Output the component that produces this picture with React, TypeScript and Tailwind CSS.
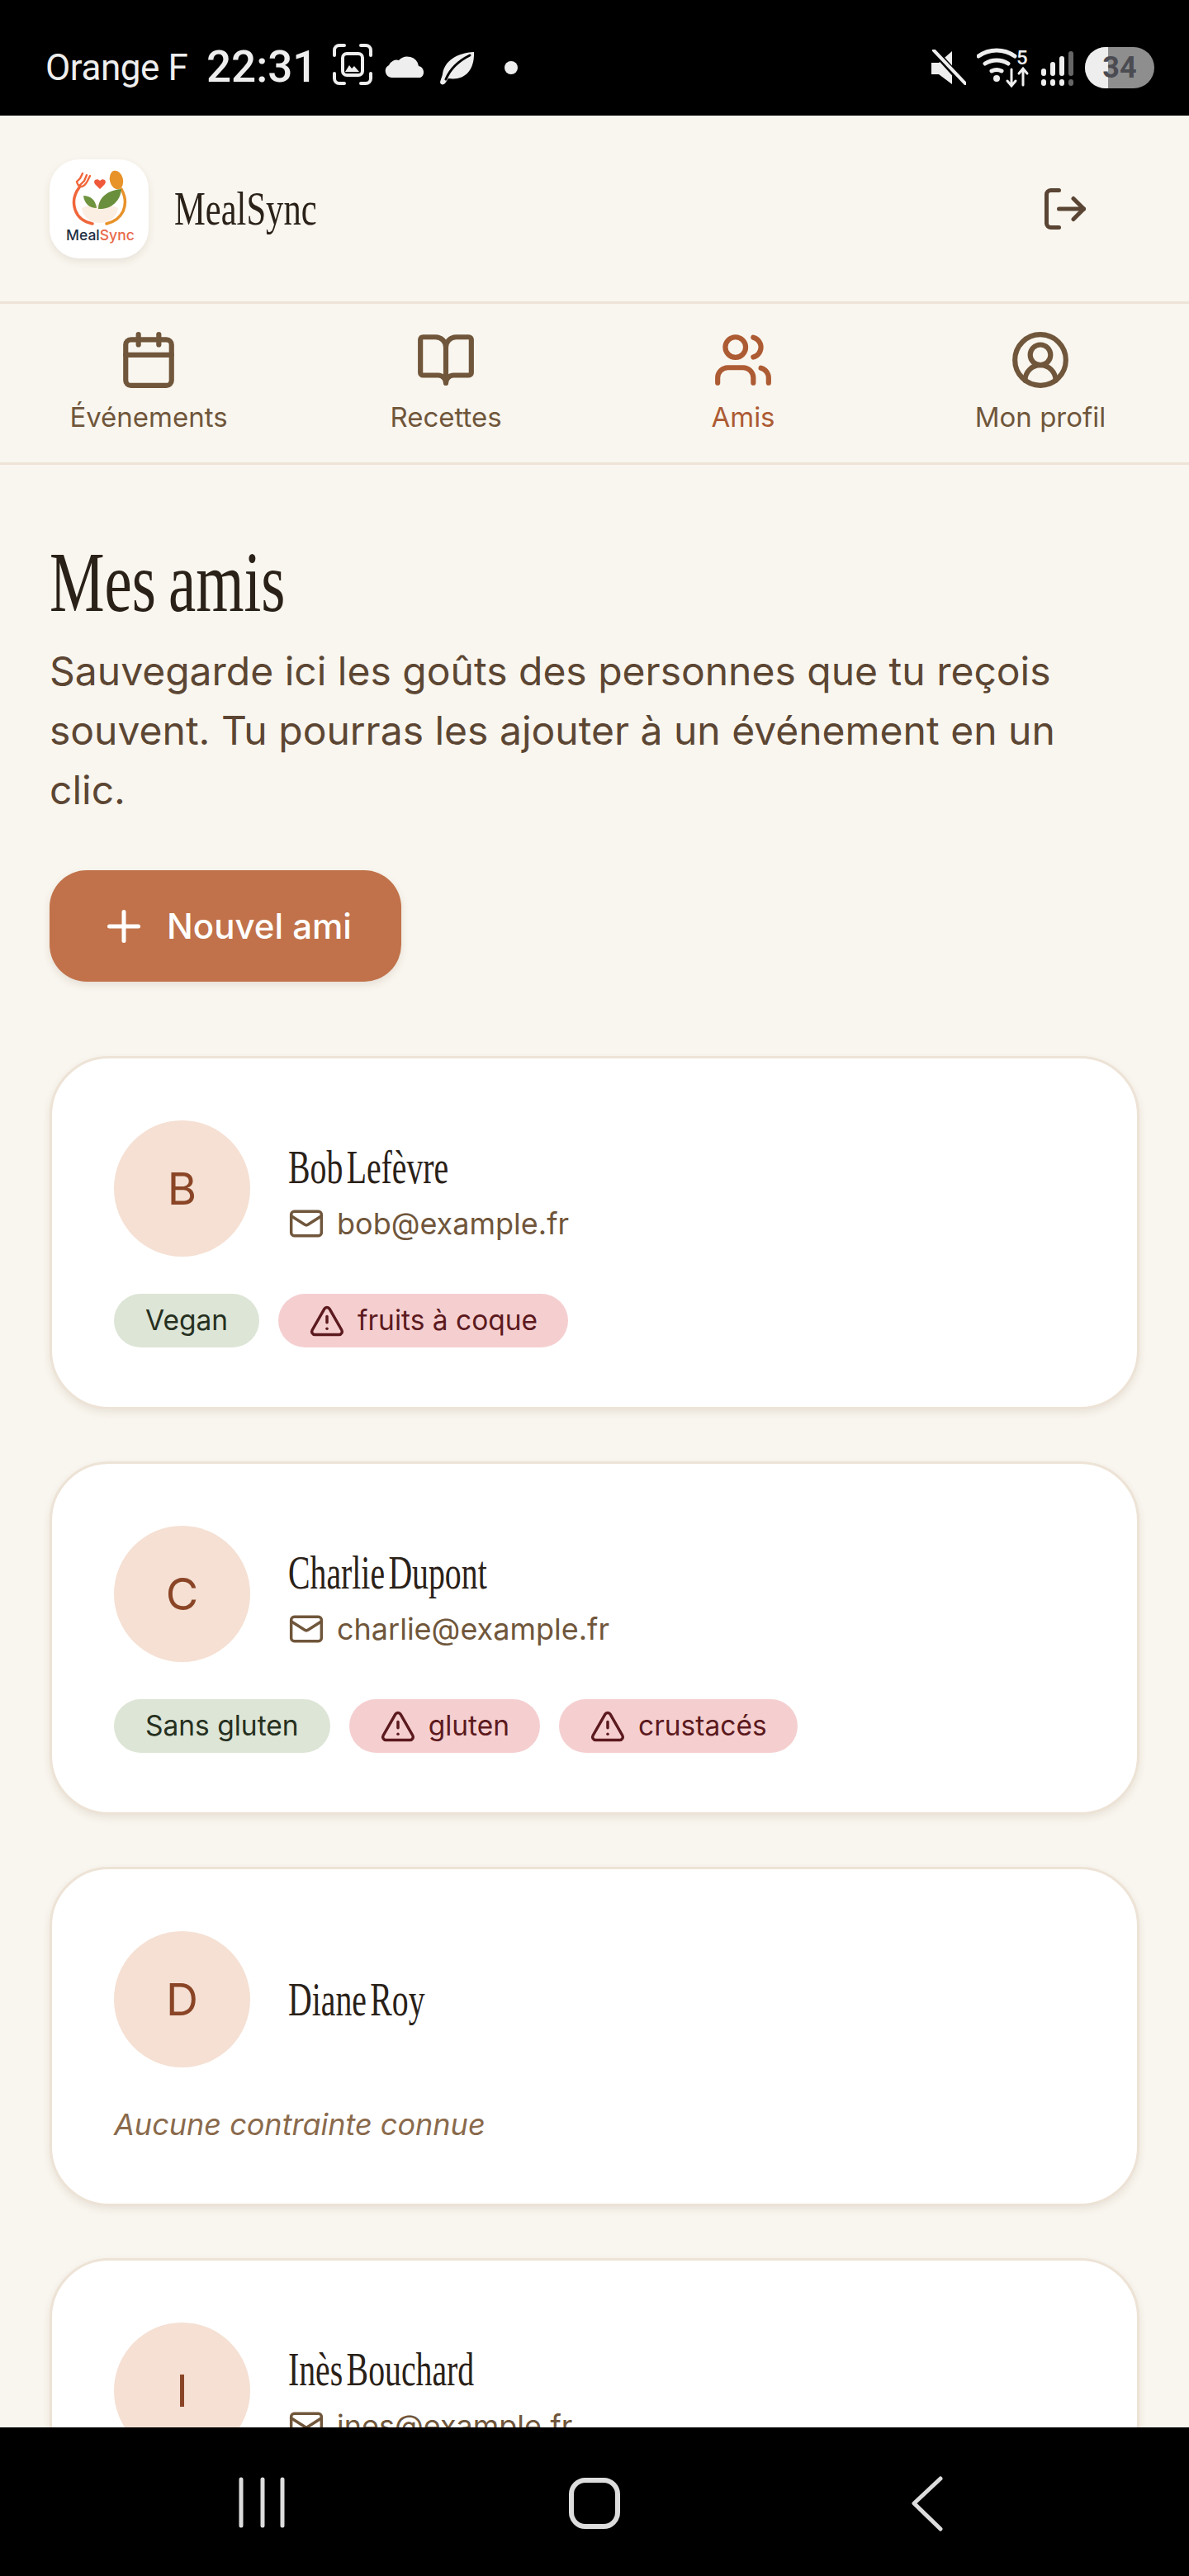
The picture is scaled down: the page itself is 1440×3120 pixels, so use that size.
import { BookOpen, Calendar, CircleUserRound, LogOut, Mail, Plus, TriangleAlert, Users } from 'lucide-react';

const friends = [
  { initial: 'B', name: 'Bob Lefèvre', email: 'bob@example.fr', diets: ['Vegan'], allergies: ['fruits à coque'] },
  { initial: 'C', name: 'Charlie Dupont', email: 'charlie@example.fr', diets: ['Sans gluten'], allergies: ['gluten', 'crustacés'] },
  { initial: 'D', name: 'Diane Roy', email: '', diets: [], allergies: [] },
  { initial: 'I', name: 'Inès Bouchard', email: 'ines@example.fr', diets: [], allergies: [] },
];

const tabs = [
  { label: 'Événements', Icon: Calendar },
  { label: 'Recettes', Icon: BookOpen },
  { label: 'Amis', Icon: Users, active: true },
  { label: 'Mon profil', Icon: CircleUserRound },
];

function StatusBar() {
  return (
    <div className="flex h-[140px] shrink-0 items-center bg-black pl-[55px] pr-[42px] pt-[24px] text-[#eeeeee]">
      <span className="w-[195px] font-['Roboto',sans-serif] text-[44px] tracking-[-0.01em]">Orange F</span>
      <span className="w-[154px] font-['Roboto',sans-serif] text-[53px] font-medium">22:31</span>
      <svg width="230" height="60" viewBox="0 0 230 60" fill="none" className="-ml-[1px]">
        <g stroke="#eee" strokeWidth="4" strokeLinecap="round">
          <path d="M2 15V9a6 6 0 0 1 6-6h6M34 3h6a6 6 0 0 1 6 6v6M2 37v6a6 6 0 0 0 6 6h6M34 49h6a6 6 0 0 0 6-6v-6" />
          <rect x="12" y="13" width="24" height="26" rx="5" />
        </g>
        <path d="M15 35l5-8 3 4 3-3 6 7z" fill="#eee" />
        <path d="M71 42a8 8 0 0 1-3-15 10 10 0 0 1 12-6 14 14 0 0 1 24 7 7.5 7.5 0 0 1 2 14z" fill="#eee" />
        <path d="M171 11c-21 1-36 11-38 27-1 4-3 8-3 10 1 3 4 3 6 1l4-6c18 3 32-8 31-32z" fill="#eee" />
        <path d="M137 44c5-12 15-22 29-29" stroke="#000" strokeWidth="3" strokeLinecap="round" />
        <circle cx="216" cy="30" r="8" fill="#eee" />
      </svg>
      <div className="ml-auto flex items-center">
        <svg width="44" height="44" viewBox="0 0 44 44" fill="none" className="mr-[13px]">
          <path d="M2 16h9l16-14v40L11 30H2z" fill="#eee" />
          <path d="M5 1l38 42" stroke="#000" strokeWidth="8" />
          <path d="M5 1l38 40" stroke="#eee" strokeWidth="4" strokeLinecap="round" />
        </svg>
        <svg width="68" height="56" viewBox="0 0 68 56" fill="none" className="mr-[10px]">
          <g stroke="#eee" strokeWidth="5" strokeLinecap="round">
            <path d="M2 14a38 38 0 0 1 44 0M10 23a26 26 0 0 1 28 0M18 32a14 14 0 0 1 12 0" />
          </g>
          <circle cx="24" cy="41" r="4" fill="#eee" />
          <text x="48" y="24" fill="#eee" fontFamily="Roboto, sans-serif" fontSize="24" fontWeight="500">5</text>
          <path d="M42 30v19M37 44l5 6 5-6M56 49V30M51 35l5-6 5 6" stroke="#eee" strokeWidth="3" strokeLinecap="round" />
        </svg>
        <svg width="40" height="56" viewBox="0 0 40 56" fill="none" className="mr-[13px]">
          <g stroke="#eee" strokeWidth="6" strokeLinecap="round">
            <path d="M3 32v3M3 45v2M14 24v11M14 45v2M25 17v18M25 45v2" />
          </g>
          <path d="M36 11v24M36 45v2" stroke="#666" strokeWidth="6" strokeLinecap="round" />
        </svg>
        <div className="relative h-[50px] w-[84px] overflow-hidden rounded-[25px] bg-[#8e8e8e]">
          <div className="h-full w-[28px] bg-[#eeeeee]" />
          <span className="absolute inset-0 flex items-center justify-center font-['Roboto',sans-serif] text-[36px] font-bold text-[#4b4b52]">34</span>
        </div>
      </div>
    </div>
  );
}

function AppLogo() {
  return (
    <div className="h-[120px] w-[120px] shrink-0 rounded-[36px] bg-white shadow-[0_4px_10px_rgba(90,60,30,0.1)]">
      <svg width="120" height="120" viewBox="0 0 120 120" fill="none">
        <path d="M39 59c12-6 32-6 44 0-1 10-10 18-22 18s-21-8-22-18z" fill="#fbeee3" />
        <path d="M36 34c-6 8-8 18-5 27 3 9 11 15 21 17" stroke="#f0663a" strokeWidth="3.5" strokeLinecap="round" />
        <path d="M33 27l4-4 3-6M37 31l5-5 3-7M33 27c1 4 2 6 5 6s6-3 8-7l3-6" stroke="#f0663a" strokeWidth="2.4" strokeLinecap="round" />
        <path d="M87 36c5 9 6 18 2 27-4 8-11 13-20 15" stroke="#e8922a" strokeWidth="3.5" strokeLinecap="round" />
        <ellipse cx="81" cy="25" rx="8" ry="11.5" transform="rotate(-14 81 25)" fill="#e8922a" />
        <path d="M61 36l-6-6c-3-4 2-8 6-4 4-4 9 0 6 4z" fill="#f0583a" />
        <path d="M57 59c-9 0-15-6-16-15 8 0 15 5 16 15z" fill="#6f9440" />
        <path d="M59 60c0-14 12-23 28-24-1 14-12 25-28 24z" fill="#6a8f3c" />
        <text x="20" y="98" fontFamily="Inter, sans-serif" fontSize="17.5" fontWeight="500" fill="#1f3044">
          Meal<tspan fill="#e8684a">Sync</tspan>
        </text>
      </svg>
    </div>
  );
}

function Serif({ children, className }: { children: string; className: string }) {
  return <span className={`inline-block origin-left whitespace-nowrap font-['Liberation_Serif',serif] text-[#2a2118] ${className}`}>{children}</span>;
}

function FriendCard({ friend }: { friend: (typeof friends)[number] }) {
  const hasTags = friend.diets.length + friend.allergies.length > 0;
  return (
    <div className="rounded-[72px] border-[3px] border-[#ede3d6] bg-white px-[75px] pb-[72px] pt-[75px] shadow-[0_4px_10px_rgba(90,60,30,0.1)]">
      <div className="flex items-center gap-[46px]">
        <div className="flex h-[165px] w-[165px] shrink-0 items-center justify-center rounded-full bg-[#f5e0d3] text-[54px] text-[#8a4526]">
          {friend.initial}
        </div>
        <div className={friend.email ? 'pt-[11px]' : ''}>
          <div className="h-[60px] leading-[60px]">
            <Serif className="scale-x-[0.71] text-[56px] [word-spacing:-0.14em]">{friend.name}</Serif>
          </div>
          {friend.email && (
            <div className="mt-[14px] flex h-[48px] items-center gap-[15px] text-[36px] text-[#70563b]">
              <Mail size={44} strokeWidth={1.9} />
              {friend.email}
            </div>
          )}
        </div>
      </div>
      {hasTags ? (
        <div className="mt-[45px] flex gap-[23px]">
          {friend.diets.map((d) => (
            <span key={d} className="flex h-[65px] items-center rounded-full bg-[#dde5d6] px-[38px] text-[33.5px] text-[#26301f]">
              {d}
            </span>
          ))}
          {friend.allergies.map((a) => (
            <span key={a} className="flex h-[65px] items-center gap-[15px] rounded-full bg-[#f5cfd0] pl-[37px] pr-[37px] text-[33.5px] text-[#5c1a1e]">
              <TriangleAlert size={44} strokeWidth={1.9} />
              {a}
            </span>
          ))}
        </div>
      ) : (
        <p className="mt-[45px] text-[36px] italic leading-[48px] text-[#8a6a4c]">Aucune contrainte connue</p>
      )}
    </div>
  );
}

function BottomNav() {
  return (
    <div className="h-[180px] shrink-0 bg-black">
      <svg width="1440" height="180" viewBox="0 0 1440 180" fill="none" stroke="#dddddd" strokeWidth="5">
        <path d="M292 63v56M318 63v56M342 63v56" strokeLinecap="round" />
        <rect x="692" y="64" width="56" height="56" rx="17" strokeWidth="6" />
        <path d="M1139 62l-32 30 32 31" strokeLinecap="round" strokeLinejoin="round" />
      </svg>
    </div>
  );
}

export default function App() {
  return (
    <div className="flex h-[3120px] w-[1440px] flex-col overflow-hidden bg-[#f9f6ef] font-['Inter',sans-serif]">
      <StatusBar />
      <div className="flex h-[225px] shrink-0 items-center justify-between px-[60px]">
        <div className="flex items-center gap-[31px]">
          <AppLogo />
          <Serif className="scale-x-[0.76] text-[56px] [word-spacing:-0.14em]">MealSync</Serif>
        </div>
        <LogOut size={60} strokeWidth={2} className="mr-[60px] text-[#5a4433]" />
      </div>
      <nav className="grid h-[198px] shrink-0 grid-cols-4 border-y-[3px] border-[#ede3d6]">
        {tabs.map(({ label, Icon, active }) => (
          <div key={label} className={`flex flex-col items-center pt-[31px] text-[33px] ${active ? 'text-[#ad5b33]' : 'text-[#70563b]'}`}>
            <Icon size={74} strokeWidth={2} />
            <span className="mt-[8px] leading-[48px]">{label}</span>
          </div>
        ))}
      </nav>
      <main className="min-h-0 flex-1 overflow-hidden px-[60px] pt-[70px]">
        <h1 className="h-[144px] leading-[144px]">
          <Serif className="scale-x-[0.72] text-[104px] [word-spacing:-0.05em]">Mes amis</Serif>
        </h1>
        <p className="w-[1300px] text-[48px] leading-[72px] text-[#5c4633]">
          Sauvegarde ici les goûts des personnes que tu reçois souvent. Tu pourras les ajouter à un événement en un clic.
        </p>
        <button
          type="button"
          className="mt-[61px] flex h-[135px] w-[426px] items-center gap-[22px] rounded-[45px] bg-[#c1724a] pl-[60px] text-[42px] font-medium text-white shadow-[0_4px_10px_rgba(90,60,30,0.12)]"
        >
          <Plus size={60} strokeWidth={2} />
          Nouvel ami
        </button>
        <div className="mt-[90px] flex flex-col gap-[63px]">
          {friends.map((f) => (
            <FriendCard key={f.initial} friend={f} />
          ))}
        </div>
      </main>
      <BottomNav />
    </div>
  );
}
